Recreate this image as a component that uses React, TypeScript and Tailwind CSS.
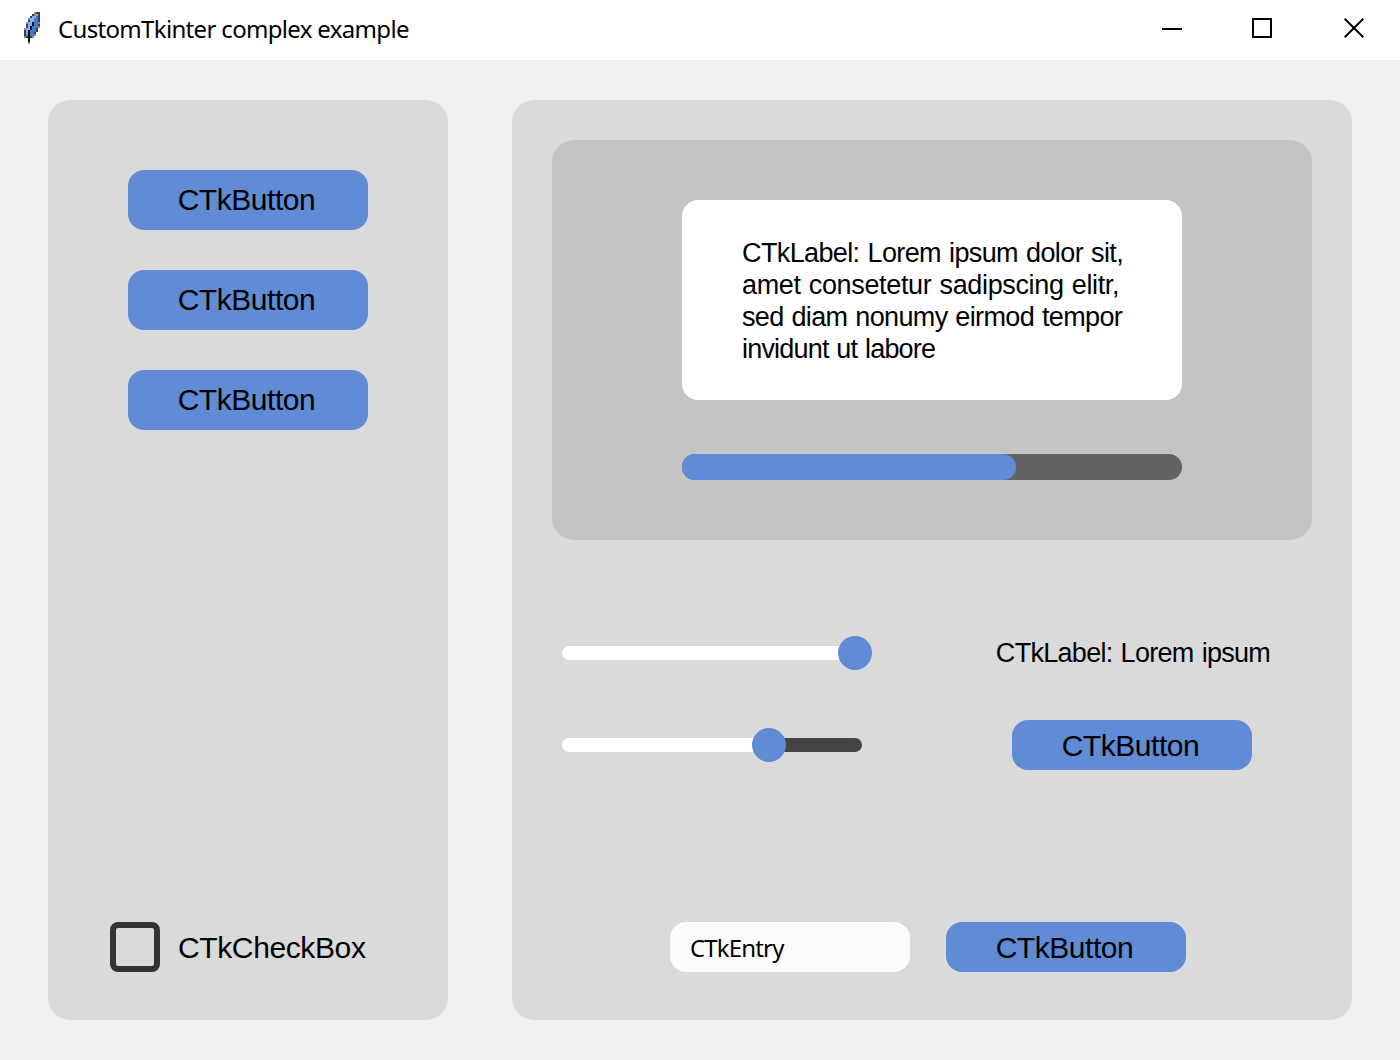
import React from "react";

const FEATHER = [
  ".....mdd",
  "....dgbd",
  "...dbbBd",
  "..mbbBBd",
  "..dbbBBd",
  ".mbbkBBg",
  ".dbbkBBd",
  ".dbkBBBm",
  "mbbkBBd.",
  "dbkBBBd.",
  "dbkBBd..",
  "dgkBBm..",
  "mdkdm...",
  "..k.....",
  "..k.....",
  "..m.....",
];

const INK: Record<string, string> = {
  m: "#8b8b8b",
  d: "#3d4043",
  g: "#7b8794",
  b: "#7fb2ee",
  B: "#3f7cd0",
  k: "#060a10",
};

function Feather() {
  return (
    <svg className="h-8 w-4 shrink-0" viewBox="0 0 8 16" shapeRendering="crispEdges">
      {FEATHER.flatMap((row, y) =>
        row.split("").map((c, x) =>
          INK[c] ? <rect key={`${x}-${y}`} x={x} y={y} width="1" height="1" fill={INK[c]} /> : null,
        ),
      )}
    </svg>
  );
}

function TitleBar() {
  return (
    <header className="flex h-[60px] items-start bg-white pl-6 pr-9">
      <div className="pt-3">
        <Feather />
      </div>
      <h1 className="ml-[18px] mt-[13px] whitespace-nowrap font-['Noto_Sans'] text-[24px] leading-8 tracking-[-0.67px]">
        CustomTkinter complex example
      </h1>
      <div className="ml-auto mt-[18px] flex h-5">
        <button aria-label="Minimize" className="mr-[70px] flex h-5 w-5 items-start pt-[10px]">
          <span className="h-[2px] w-5 bg-black" />
        </button>
        <button aria-label="Maximize" className="mr-[72px] h-5 w-5 border-2 border-black" />
        <button aria-label="Close" className="h-5 w-5">
          <svg className="h-5 w-5" viewBox="0 0 20 20" fill="none" stroke="#000" strokeWidth="2">
            <path d="M.7 .7 19.3 19.3M19.3 .7.7 19.3" />
          </svg>
        </button>
      </div>
    </header>
  );
}

function CTkButton({ short = false }: { short?: boolean }) {
  return (
    <button
      className={`flex w-60 justify-center rounded-2xl bg-[#608bd5] pr-[3px] text-[30px] tracking-[-0.45px] ${
        short ? "h-[50px] leading-[52px]" : "h-[60px] leading-[60px]"
      }`}
    >
      CTkButton
    </button>
  );
}

function Slider({ fill, rest, knob }: { fill: string; rest: string; knob: string }) {
  return (
    <div className="relative flex h-[34px] w-[310px] items-center">
      <div className={`h-[14px] rounded-l-full bg-white ${fill}`} />
      <div className={`h-[14px] rounded-r-full bg-[#444] ${rest}`} />
      <div className={`absolute top-0 h-[34px] w-[34px] rounded-full bg-[#608bd5] ${knob}`} />
    </div>
  );
}

export default function App() {
  return (
    <div className="flex h-[1060px] w-[1400px] flex-col overflow-hidden bg-[#f0f0f0] font-['Liberation_Sans',Arial,sans-serif] text-black">
      <TitleBar />
      <main className="flex flex-1 gap-16 px-12 py-10">
        <aside className="flex w-[400px] flex-col items-center gap-10 rounded-[22px] bg-[#dadada] pb-12 pt-[70px]">
          <CTkButton />
          <CTkButton />
          <CTkButton />
          <label className="mt-auto flex h-[50px] w-[276px] items-center">
            <span className="h-[50px] w-[50px] rounded-lg border-[6px] border-[#333]" />
            <span className="ml-[18px] mt-[2px] whitespace-nowrap text-[30px] leading-[50px] tracking-[-0.38px]">
              CTkCheckBox
            </span>
          </label>
        </aside>

        <section className="flex flex-1 flex-col rounded-[22px] bg-[#dadada] px-10 pb-12 pt-10">
          <div className="flex h-[400px] flex-col items-center rounded-[22px] bg-[#c4c4c4] pt-[60px]">
            <div className="h-[200px] w-[500px] whitespace-nowrap rounded-2xl bg-white pl-[60px] pt-[37px] text-[27px] leading-8">
              <p className="tracking-[-0.62px] [word-spacing:1.2px]">CTkLabel: Lorem ipsum dolor sit,</p>
              <p className="tracking-[-0.35px] [word-spacing:1px]">amet consetetur sadipscing elitr,</p>
              <p className="tracking-[-0.64px] [word-spacing:1px]">sed diam nonumy eirmod tempor</p>
              <p className="tracking-[-0.8px] [word-spacing:1px]">invidunt ut labore</p>
            </div>
            <div className="mt-[54px] h-[26px] w-[500px] rounded-full bg-[#636363]">
              <div className="h-full w-[334px] rounded-full bg-[#608bd5]" />
            </div>
          </div>

          <div className="mt-24 flex justify-between pl-[10px]">
            <div className="flex flex-col gap-[58px]">
              <Slider fill="w-[293px]" rest="w-0" knob="left-[276px]" />
              <Slider fill="w-[207px]" rest="w-[93px]" knob="left-[190px]" />
            </div>
            <div className="flex w-[360px] flex-col items-center">
              <p className="whitespace-nowrap pl-[2px] text-[27px] leading-[34px] tracking-[-0.7px] [word-spacing:1.2px]">
                CTkLabel: Lorem ipsum
              </p>
              <div className="mt-[50px]">
                <CTkButton short />
              </div>
            </div>
          </div>

          <div className="mt-auto flex gap-9 pl-[118px]">
            <input
              defaultValue="CTkEntry"
              className="h-[50px] w-60 rounded-2xl bg-[#fcfcfc] px-5 font-['Noto_Sans'] text-[24px] tracking-[-0.85px] outline-none"
            />
            <CTkButton short />
          </div>
        </section>
      </main>
    </div>
  );
}
